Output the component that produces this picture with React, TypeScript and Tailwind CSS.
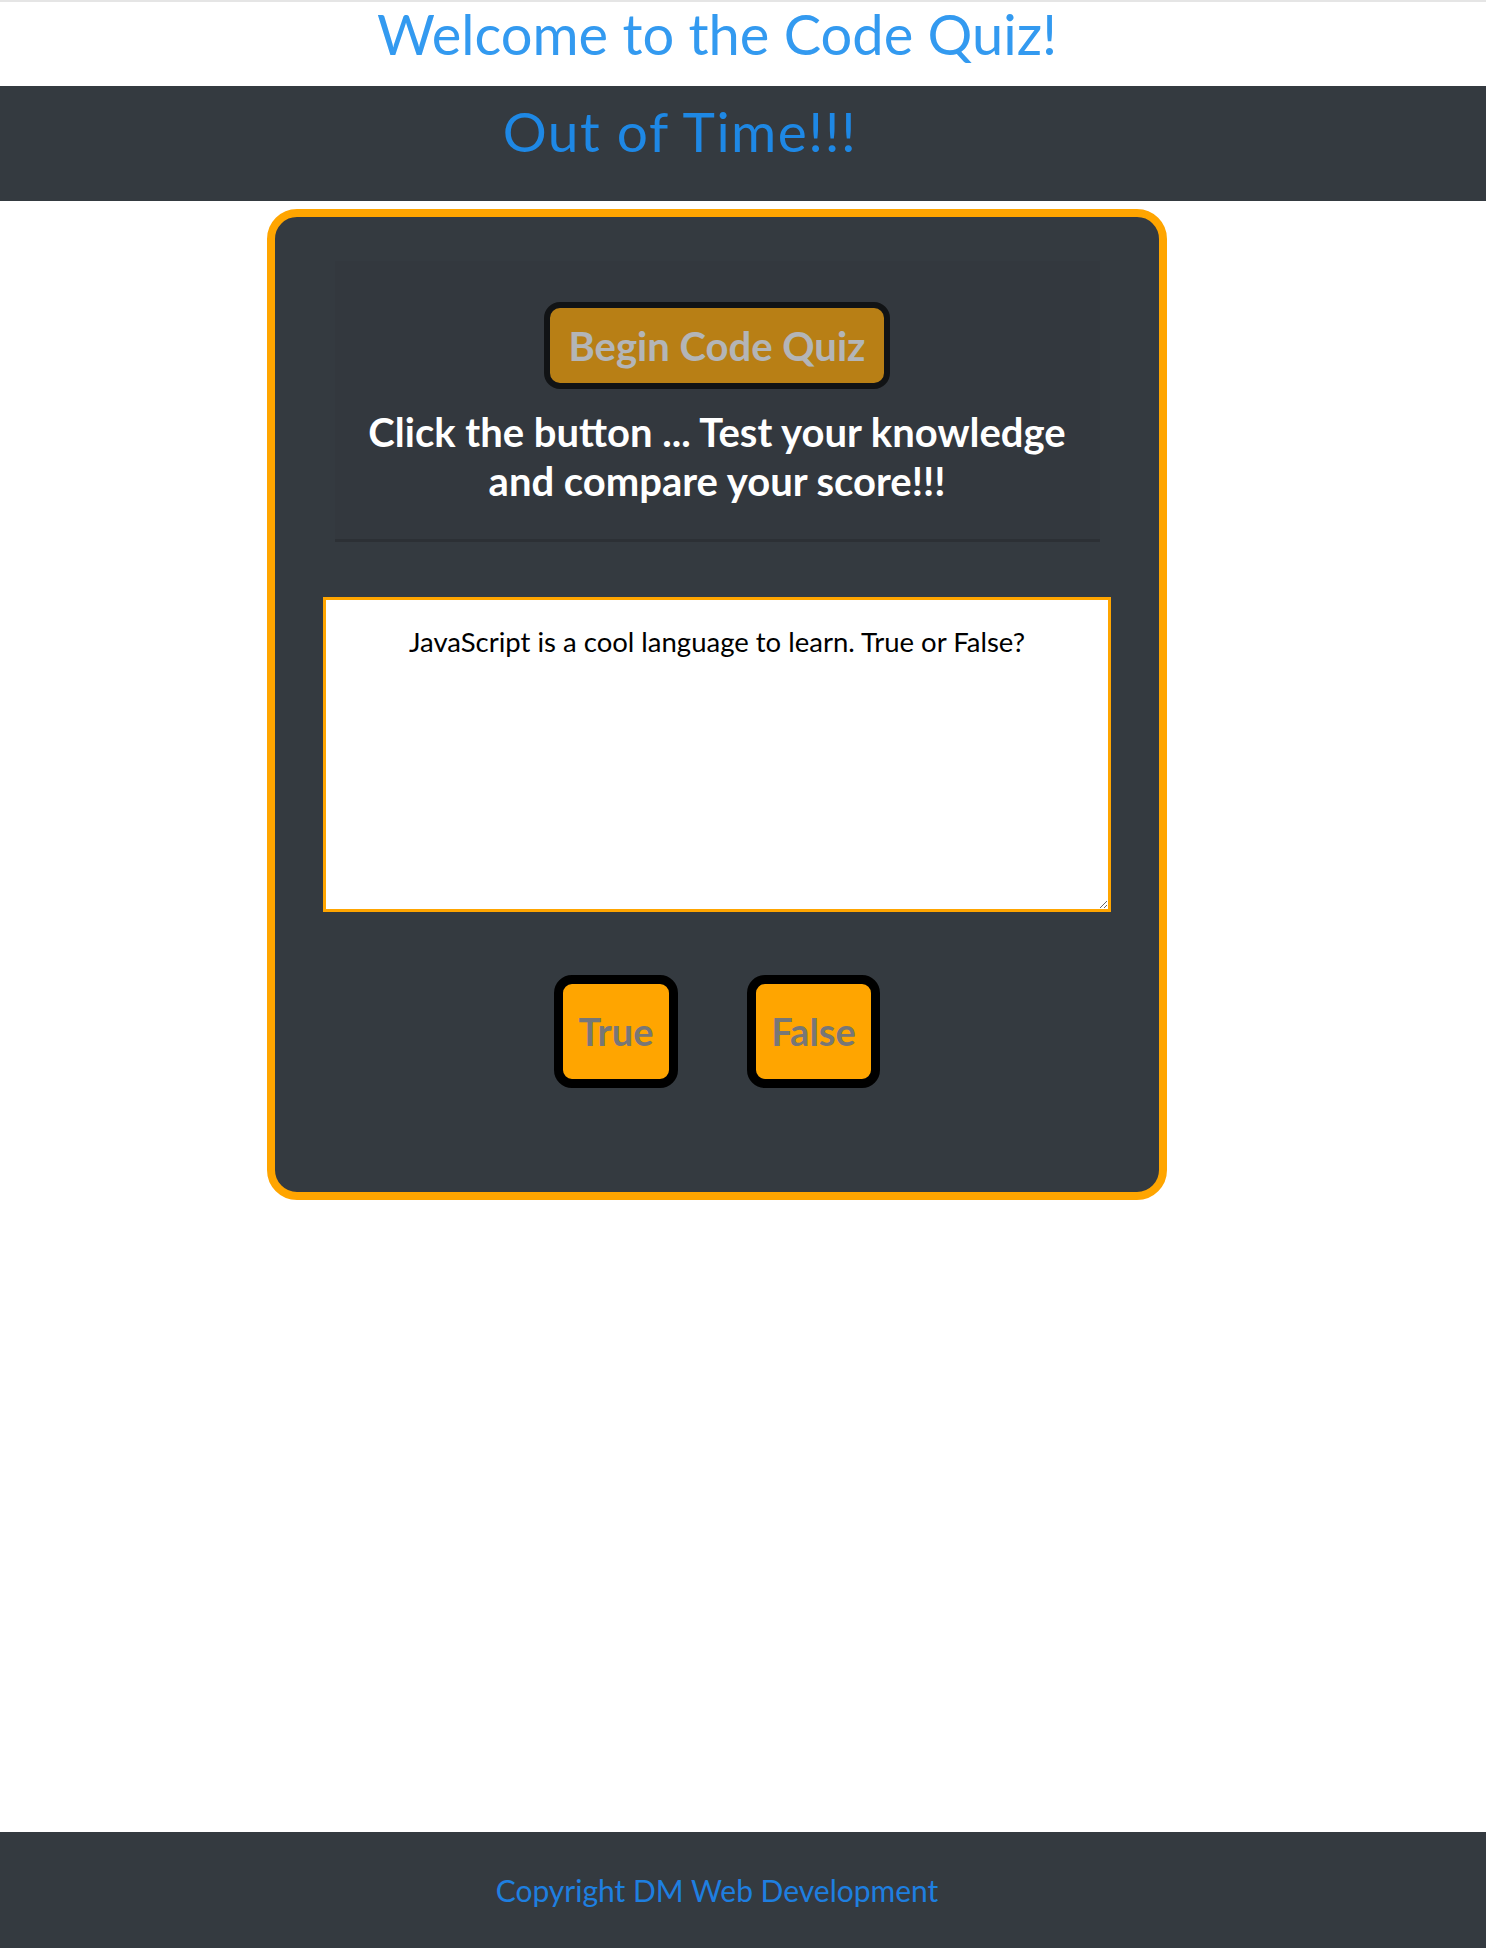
import React from "react";

export default function App() {
  return (
    <div className="min-h-screen flex flex-col bg-white">
      <header className="h-[86px] border-t-2 border-[#e5e5e5] pr-[52px]">
        <h1 className="text-center text-[56px] leading-[1.2] text-[#339af0] font-['Lato',sans-serif] -mt-[2px]">
          Welcome to the Code Quiz!
        </h1>
      </header>

      <nav className="h-[115px] bg-[#343a40] pr-[126px] pt-[12px]">
        <h2 className="text-center text-[55px] tracking-[1.5px] leading-[1.2] text-[#1e88e5] font-['Lato',sans-serif]">
          Out of Time!!!
        </h2>
      </nav>

      <main className="pr-[52px] pt-[8px]">
        <div className="mx-auto w-[900px] h-[991px] rounded-[30px] border-[8px] border-[#ffa500] bg-[#343a40] flex flex-col items-center">
          <section className="mt-[44px] w-[765px] h-[281px] bg-[#33383e] border-b-[3px] border-[#2c3035] flex flex-col items-center pt-[41px]">
            <button className="h-[87px] w-[346px] rounded-[16px] border-[6px] border-black bg-[#ffa500] opacity-65 text-[#f8f9fa] text-[40px] font-bold font-['Lato',sans-serif] flex items-center justify-center">
              Begin Code Quiz
            </button>
            <p className="mt-[19px] text-center text-white text-[40px] leading-[49px] font-bold font-['Lato',sans-serif]">
              Click the button ... Test your knowledge
              <br />
              and compare your score!!!
            </p>
          </section>

          <textarea
            readOnly
            value="JavaScript is a cool language to learn. True or False?"
            className="mt-[55px] w-[788px] h-[315px] border-[3px] border-[#ffa500] bg-white text-black text-center text-[27.5px] leading-[1.3] pt-[24px] px-4 font-['Lato',sans-serif] outline-none"
          />

          <div className="mt-[63px] flex gap-[69px]">
            <button className="w-[124px] h-[113px] rounded-[18px] border-[9px] border-black bg-[#ffa500] text-[#777777] text-[38px] font-bold font-['Lato',sans-serif] flex items-center justify-center">
              True
            </button>
            <button className="w-[133px] h-[113px] rounded-[18px] border-[9px] border-black bg-[#ffa500] text-[#777777] text-[38px] font-bold font-['Lato',sans-serif] flex items-center justify-center">
              False
            </button>
          </div>
        </div>
      </main>

      <footer className="mt-auto h-[116px] bg-[#343a40] pr-[52px] flex items-center justify-center">
        <p className="text-[30px] font-normal text-[#1e7fe0] font-['Lato',sans-serif]">
          Copyright DM Web Development
        </p>
      </footer>
    </div>
  );
}
